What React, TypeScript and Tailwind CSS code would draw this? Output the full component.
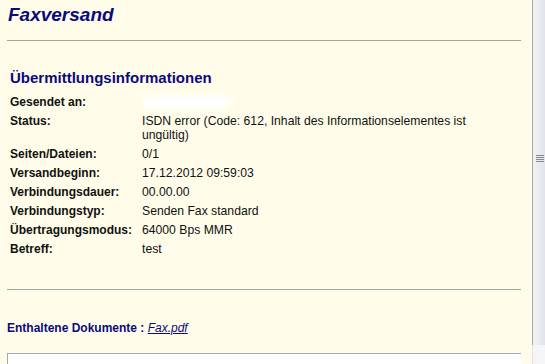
import React from "react";

const rows: { label: string; value: React.ReactNode }[] = [
  { label: "Seiten/Dateien:", value: "0/1" },
  { label: "Versandbeginn:", value: "17.12.2012 09:59:03" },
  { label: "Verbindungsdauer:", value: "00.00.00" },
  { label: "Verbindungstyp:", value: "Senden Fax standard" },
  { label: "Übertragungsmodus:", value: "64000 Bps MMR" },
  { label: "Betreff:", value: "test" },
];

export default function App() {
  return (
    <div className="flex h-[364px] w-[545px] overflow-hidden bg-[#fffde9] font-['Liberation_Sans',Arial,sans-serif] text-[12px] text-[#111]">
      <div className="flex w-[532px] flex-col">
        <h1 className="pl-[8px] pt-[4px] text-[19px] font-bold italic leading-[22px] text-[#0a0a80]">Faxversand</h1>
        <div className="ml-[7px] mt-[14px] w-[514px] border-t border-[#a3a3a3]" />

        <h2 className="mt-[28px] pl-[10px] text-[15px] font-bold leading-[18px] text-[#0a0a80]">Übermittlungsinformationen</h2>

        <table className="mt-[5px] ml-[10px] border-collapse">
          <tbody>
            <tr className="h-[20px] align-top">
              <td className="w-[132px] py-[2.5px] font-bold leading-[14px]">Gesendet an:</td>
              <td className="py-[2.5px] leading-[14px]">
                <span className="mt-[1px] block h-[12px] w-[88px] rounded-full bg-white blur-[2px]" />
              </td>
            </tr>
            <tr className="align-top">
              <td className="py-[2px] font-bold leading-[14px]">Status:</td>
              <td className="whitespace-nowrap py-[2px] text-[12.2px] leading-[14px]">
                ISDN error (Code: 612, Inhalt des Informationselementes ist
                <br />
                ungültig)
              </td>
            </tr>
            {rows.map((r) => (
              <tr key={r.label} className="align-top">
                <td className="whitespace-nowrap py-[2.5px] font-bold leading-[14px]">{r.label}</td>
                <td className="whitespace-nowrap py-[2.5px] text-[12.2px] leading-[14px]">{r.value}</td>
              </tr>
            ))}
          </tbody>
        </table>

        <div className="ml-[7px] mt-[31px] w-[514px] border-t border-[#a3a3a3]" />

        <p className="mt-[31px] pl-[7px] leading-[14px] text-[#0a0a80]">
          <span className="font-bold">Enthaltene Dokumente : </span>
          <a className="italic underline">Fax.pdf</a>
        </p>

        <div className="ml-[7px] mt-[18px] h-[40px] w-[514px] border-l border-t border-[#a8a8a8] bg-white" />
      </div>

      <div className="flex w-[13px] flex-col">
        <div className="flex h-[345px] flex-col items-end border-l border-[#a9a9b0] bg-gradient-to-r from-[#f3f3f6] to-[#e2e2ec] pt-[155px] pr-[1px]">
          <div className="flex w-[8px] flex-col gap-[1px]">
            <div className="h-px bg-[#8a8a92]" />
            <div className="h-px bg-[#8a8a92]" />
            <div className="h-px bg-[#8a8a92]" />
            <div className="h-px bg-[#8a8a92]" />
          </div>
        </div>
        <div className="flex-1 border-l border-[#e4e4ea] bg-[#f5f5f8]" />
      </div>
    </div>
  );
}
